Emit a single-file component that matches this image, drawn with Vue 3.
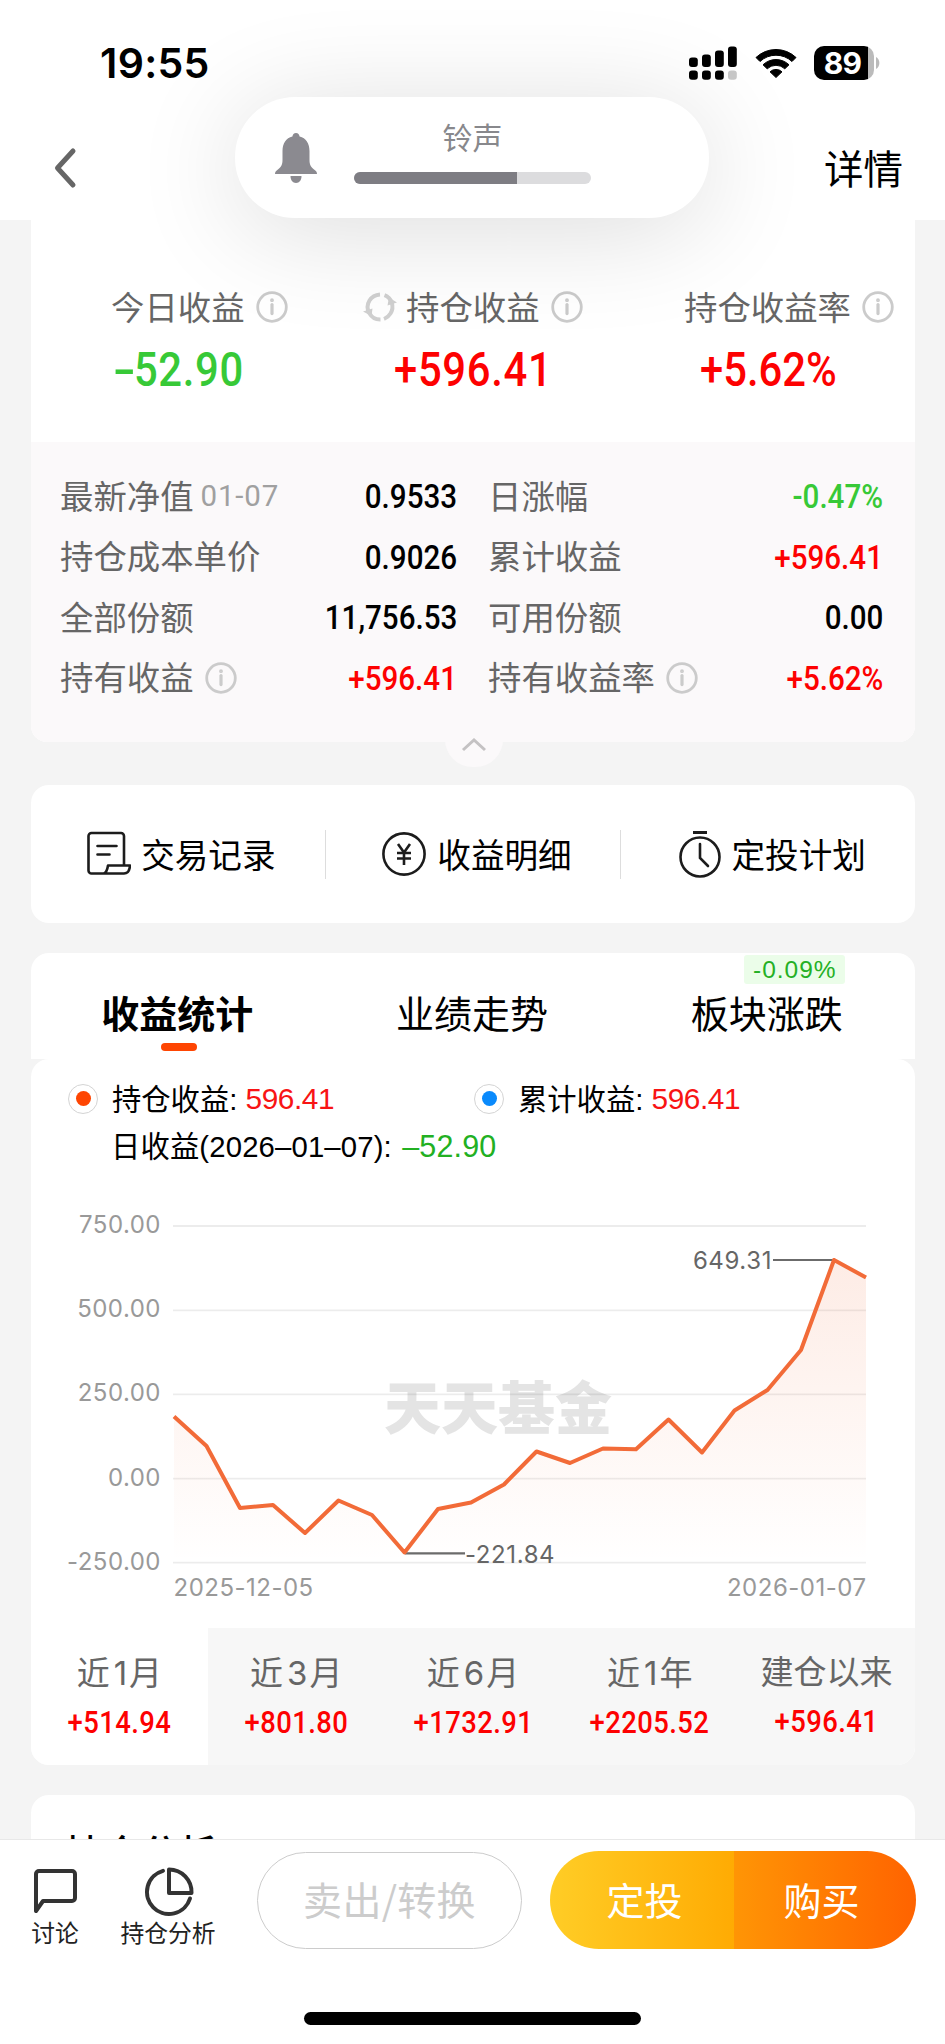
<script setup>
import { h } from 'vue'

const InfoIcon = () =>
  h('svg', { width: 32, height: 32, viewBox: '0 0 32 32', fill: 'none', stroke: '#cbcbcb' }, [
    h('circle', { cx: 16, cy: 16, r: 14.3, 'stroke-width': 2.8 }),
    h('path', { d: 'M16 13.6v9', 'stroke-width': 3.2, 'stroke-linecap': 'round' }),
    h('circle', { cx: 16, cy: 9.2, r: 1.1, 'stroke-width': 1.6 })
  ])

const details = [
  { label: '最新净值', date: '01-07', value: '0.9533', tone: 'ink' },
  { label: '日涨幅', value: '-0.47%', tone: 'down' },
  { label: '持仓成本单价', value: '0.9026', tone: 'ink' },
  { label: '累计收益', value: '+596.41', tone: 'up' },
  { label: '全部份额', value: '11,756.53', tone: 'ink' },
  { label: '可用份额', value: '0.00', tone: 'ink' },
  { label: '持有收益', info: true, value: '+596.41', tone: 'up' },
  { label: '持有收益率', info: true, value: '+5.62%', tone: 'up' }
]

const yLabels = [
  { text: '750.00', y: 26 },
  { text: '500.00', y: 110.3 },
  { text: '250.00', y: 194.3 },
  { text: '0.00', y: 278.7 },
  { text: '-250.00', y: 362.7 }
]

const points = [
  [143, 216.5], [175.5, 246], [209, 308], [242, 305], [274, 333], [307.5, 300.5], [341, 315],
  [373.5, 352.5], [407, 309], [440, 302.5], [473, 284.5], [505.5, 251.5], [539, 263], [572, 248.5],
  [605, 249.3], [637.5, 219.5], [671, 252.5], [703.5, 210.5], [736.5, 190], [770, 150], [803, 60],
  [835, 77.5]
]
const line = points.map((p) => p.join(',')).join(' ')
const area = `143,362 ${line} 835,362`

const periods = [
  { a: '近', n: '1', b: '月', value: '+514.94' },
  { a: '近', n: '3', b: '月', value: '+801.80' },
  { a: '近', n: '6', b: '月', value: '+1732.91' },
  { a: '近', n: '1', b: '年', value: '+2205.52' },
  { a: '建仓以来', n: '', b: '', value: '+596.41' }
]
</script>

<template>
  <div class="screen">
    <header class="top">
      <div class="status">
        <span class="clock">19:55</span>
        <div class="status-icons">
          <svg width="48" height="34" viewBox="0 0 48 34">
            <rect x="0" y="11.500" width="8.8" height="9.500" rx="3" />
            <rect x="13" y="8.500" width="8.8" height="12.500" rx="3" />
            <rect x="26" y="4.500" width="8.8" height="16.500" rx="3" />
            <rect x="39" y="0.500" width="8.8" height="20.500" rx="3" />
            <rect x="0" y="24.500" width="8.8" height="9.300" rx="3" />
            <rect x="13" y="24.500" width="8.8" height="9.300" rx="3" />
            <rect x="26" y="24.500" width="8.8" height="9.300" rx="3" />
            <rect x="39" y="24.500" width="8.8" height="9.300" rx="3" fill="#c8c8c8" />
          </svg>
          <svg class="wifi" width="42" height="32" viewBox="0 0 42 32">
            <path d="M1 10.500a29 29 0 0 1 40 0l-4 4a23.500 23.500 0 0 0-32 0z" stroke="#000" stroke-width="1" stroke-linejoin="round" />
            <path d="M8 17.800a18.700 18.700 0 0 1 26 0l-4.200 4a12.800 12.800 0 0 0-17.600 0z" stroke="#000" stroke-width="1" stroke-linejoin="round" />
            <path d="M15 24.800a8.800 8.800 0 0 1 12 0l-6 5.700z" stroke="#000" stroke-width="1" stroke-linejoin="round" />
          </svg>
          <div class="battery"><span class="level">89</span></div>
          <svg class="nub" width="6" height="12" viewBox="0 0 6 12"><path d="M1 0a7 7 0 0 1 0 12z" fill="#bbb" /></svg>
        </div>
      </div>
      <nav class="nav">
        <svg width="24" height="42" viewBox="0 0 24 42" fill="none" stroke="#666" stroke-width="5" stroke-linecap="round" stroke-linejoin="round"><path d="M20 4 4.500 21 20 38" /></svg>
        <span class="nav-link">详情</span>
      </nav>
    </header>

    <main class="content">
      <section class="summary">
        <div class="stats">
          <div class="stat s1">
            <div class="stat-label"><span>今日收益</span><InfoIcon class="info" /></div>
            <div class="big down"><span class="dash">-</span>52.90</div>
          </div>
          <div class="stat s2">
            <div class="stat-label">
              <svg class="refresh" width="34" height="30" viewBox="0 0 34 30" fill="none" stroke="#d0d0d0" stroke-width="4">
                <path d="M17.500 27.500A12.500 12.500 0 0 1 6.500 8.500Q10 3 17 2.500" /><path d="M21.500 3.200A12.500 12.500 0 0 1 27.500 21.500Q25 25.500 21 27" />
                <path d="M0 19.500 9.500 16.500 8.500 24zM34 10.500l-9.500 3L26 5.500z" fill="#d0d0d0" stroke="none" />
              </svg><span>持仓收益</span><InfoIcon class="info" />
            </div>
            <div class="big up">+596.41</div>
          </div>
          <div class="stat s3">
            <div class="stat-label"><span>持仓收益率</span><InfoIcon class="info" /></div>
            <div class="big up">+5.62%</div>
          </div>
        </div>
        <div class="details">
          <div v-for="(d, i) in details" :key="i" class="detail">
            <span class="detail-label">{{ d.label }}</span>
            <span v-if="d.date" class="detail-date">{{ d.date }}</span>
            <InfoIcon v-if="d.info" class="info" />
            <span class="detail-value" :class="d.tone">{{ d.value }}</span>
          </div>
          <div class="fold">
            <svg width="26" height="14" viewBox="0 0 26 14" fill="none" stroke="#c4c2c3" stroke-width="3"><path d="M2 12 13 2l11 10" /></svg>
          </div>
        </div>
      </section>

      <section class="actions">
        <div class="action">
          <svg width="44" height="46" viewBox="0 0 44 46" fill="none" stroke="#1c1c1c" stroke-width="2.600" stroke-linejoin="round" stroke-linecap="round">
            <path d="M17 42.500H4.500a3 3 0 0 1-3-3V5a3 3 0 0 1 3-3H34a3 3 0 0 1 3 3v29M17 42.500q3-1.500 4-8h22q-.5 8-6 8zM10.500 15h19M10.500 23.500h12" />
          </svg>
          <span>交易记录</span>
        </div>
        <i class="rule"></i>
        <div class="action">
          <svg width="46" height="46" viewBox="0 0 46 46" fill="none" stroke="#1c1c1c" stroke-width="2.600">
            <circle cx="23" cy="23" r="20.600" /><path d="m17 13 6 8.500 6-8.500M23 21.500V34M16 22h14M16 27.500h14" />
          </svg>
          <span>收益明细</span>
        </div>
        <i class="rule"></i>
        <div class="action">
          <svg width="44" height="48" viewBox="0 0 44 48" fill="none" stroke="#1c1c1c" stroke-width="2.600">
            <circle cx="22" cy="27" r="19.500" /><path d="M15 2.500h14" stroke-width="3" /><path d="M22 14v14l8 8" stroke-linecap="round" />
          </svg>
          <span>定投计划</span>
        </div>
      </section>

      <section class="tabs">
        <div class="tab active"><span>收益统计</span></div>
        <div class="tab"><span>业绩走势</span></div>
        <div class="tab"><span>板块涨跌</span><em class="badge">-0.09%</em></div>
      </section>

      <section class="chart-card">
        <div class="legend">
          <div class="legend-item"><i class="radio orange"></i><span class="legend-label">持仓收益: </span><b class="up2">596.41</b></div>
          <div class="legend-item"><i class="radio blue"></i><span class="legend-label">累计收益: </span><b class="up2">596.41</b></div>
        </div>
        <div class="daily"><span>日收益(2026–01–07): </span><b class="down2">–52.90</b></div>
        <svg class="chart" width="884" height="424" viewBox="0 0 884 424">
          <defs>
            <linearGradient id="fade" gradientUnits="userSpaceOnUse" x1="0" y1="60" x2="0" y2="362">
              <stop offset="0" stop-color="#f26b38" stop-opacity=".13" />
              <stop offset="1" stop-color="#f26b38" stop-opacity="0" />
            </linearGradient>
          </defs>
          <text class="mark" x="353" y="229">天天基金</text>
          <line v-for="g in yLabels" :key="'g' + g.text" x1="142" x2="835" :y1="g.y" :y2="g.y" stroke="#000" stroke-opacity=".075" stroke-width="1.800" />
          <text v-for="g in yLabels" :key="g.text" class="axis" x="130" :y="g.y + 7" text-anchor="end">{{ g.text }}</text>
          <polygon :points="area" fill="url(#fade)" />
          <path d="M742 60h61M374 353.300h60" stroke="#6b6b6b" stroke-width="2.200" />
          <polyline :points="line" fill="none" stroke="#f26b38" stroke-width="4" stroke-linejoin="round" />
          <text class="call" x="741" y="69" text-anchor="end">649.31</text>
          <text class="call" x="434" y="362.500">-221.84</text>
          <text class="axis" x="142.500" y="396">2025-12-05</text>
          <text class="axis" x="835.500" y="396" text-anchor="end">2026-01-07</text>
        </svg>
        <div class="periods">
          <div v-for="(p, i) in periods" :key="i" class="period" :class="{ on: i === 0 }">
            <div class="period-label">{{ p.a }}<span v-if="p.n" class="digit">{{ p.n }}</span>{{ p.b }}</div>
            <div class="period-value">{{ p.value }}</div>
          </div>
        </div>
      </section>

      <section class="analysis"><span>持仓分析</span></section>
    </main>

    <footer class="bottom">
      <div class="tool t1">
        <svg width="44" height="48" viewBox="0 0 44 48" fill="none" stroke="#333" stroke-width="4" stroke-linejoin="round"><path d="M3 44V7a3 3 0 0 1 3-3h33a3 3 0 0 1 3 3v24a3 3 0 0 1-3 3H10z" /></svg>
        <span>讨论</span>
      </div>
      <div class="tool t2">
        <svg width="50" height="50" viewBox="0 0 50 50" fill="none" stroke="#333" stroke-width="4" stroke-linejoin="round" stroke-linecap="round"><path d="M19 3.800A22 22 0 1 0 46 31.500" /><path d="M25 2.500V26h22.500A22.600 22.600 0 0 0 25 2.500z" /></svg>
        <span>持仓分析</span>
      </div>
      <div class="sell">卖出/转换</div>
      <div class="trade"><div class="plan">定投</div><div class="buy">购买</div></div>
      <i class="home"></i>
    </footer>

    <div class="ringer">
      <svg width="42" height="50" viewBox="0 0 42 50" fill="#8b8a90">
        <path d="M21 0c2.200 0 3.300 1.500 3.600 3.600C31 5 34.500 10.500 34.500 18v9c0 5.500 2 7.500 5.500 10.300 1.200 1 2 2 2 3.700H0c0-1.700.8-2.700 2-3.700C5.500 34.500 7.500 32.500 7.500 27v-9c0-7.500 3.500-13 9.900-14.400C17.700 1.500 18.800 0 21 0z" />
        <path d="M15.500 43h11c0 4-2 7-5.500 7s-5.500-3-5.500-7z" />
      </svg>
      <div class="ringer-body">
        <span>铃声</span>
        <div class="track"><i></i></div>
      </div>
    </div>
  </div>
</template>

<style>
body {
  margin: 0;
}
</style>

<style scoped>
.screen {
  position: relative;
  width: 945px;
  height: 2044px;
  overflow: hidden;
  display: flex;
  flex-direction: column;
  background: #f4f4f4;
  color: #000;
  font-family: "Liberation Sans", "Noto Sans CJK SC", sans-serif;
}
svg {
  display: block;
  flex: none;
}
.top {
  height: 220px;
  flex: none;
  background: #fff;
}
.status {
  height: 124px;
  box-sizing: border-box;
  padding: 39px 64px 0 100px;
  display: flex;
  justify-content: space-between;
  align-items: flex-start;
}
.clock {
  font: 600 41px/48px Inter, sans-serif;
  letter-spacing: 0.3px;
}
.status-icons {
  display: flex;
  align-items: center;
  padding-top: 7px;
}
.wifi {
  margin: 0 17px 0 18px;
}
.battery {
  width: 60px;
  height: 34px;
  border-radius: 10px;
  background: linear-gradient(90deg, #000 54px, #bbb 54px);
}
.level {
  display: block;
  width: 57px;
  text-align: center;
  color: #fff;
  font: 700 30px/34px Inter, sans-serif;
  letter-spacing: -0.8px;
}
.nub {
  margin-left: 1px;
}
.nav {
  display: flex;
  justify-content: space-between;
  align-items: center;
  padding: 0 42px 0 53px;
  height: 88px;
}
.nav-link {
  font-size: 39.5px;
  line-height: 88px;
  padding-top: 4px;
}
.content {
  height: 1619px;
  overflow: hidden;
  padding: 0 30px 0 31px;
}
.summary {
  border-radius: 0 0 16px 16px;
  background: #fff;
}
.stats {
  height: 222px;
  display: grid;
  grid-template-columns: 295px 295px 294px;
}
.stat {
  padding-top: 62px;
}
.stat-label {
  display: flex;
  align-items: center;
  height: 50px;
  font-size: 33.4px;
  color: #666;
  white-space: nowrap;
}
.stat-label span,
.detail-label {
  padding-bottom: 4px;
}
.s1 .stat-label {
  padding-left: 80px;
}
.s2 .stat-label {
  padding-left: 37px;
}
.s3 .stat-label {
  padding-left: 63px;
}
.info {
  margin-left: 11px;
}
.refresh {
  margin-right: 9px;
}
.big {
  font: 500 48px/56px Roboto, sans-serif;
  margin-top: 10px;
  letter-spacing: 0.8px;
  transform: scaleX(0.87);
  transform-origin: left;
}
.dash {
  display: inline-block;
  width: 24px;
  transform: scaleX(1.6);
  transform-origin: left;
}
.s1 .big {
  margin-left: 82px;
}
.s2 .big {
  margin-left: 68px;
}
.s3 .big {
  margin-left: 79px;
  letter-spacing: 0;
}
.up {
  color: #fd0101;
}
.down {
  color: #37c937;
}
.ink {
  color: #000;
}
.details {
  position: relative;
  height: 300px;
  box-sizing: border-box;
  padding: 24px 32px 0 29px;
  background: #fbf9fa;
  border-radius: 0 0 16px 16px;
  display: grid;
  grid-template-columns: 397px 395px;
  grid-auto-rows: 60.5px;
  column-gap: 31px;
}
.detail {
  display: flex;
  align-items: center;
}
.detail-label {
  font-size: 33.4px;
  color: #666;
}
.detail-date {
  font: 400 29.5px Roboto, sans-serif;
  letter-spacing: 0.8px;
  color: #a0a0a0;
  margin-left: 7px;
}
.detail-value {
  margin-left: auto;
  font: 500 34px Roboto, sans-serif;
  transform: scaleX(0.87);
  transform-origin: right;
}
.fold {
  position: absolute;
  left: 414px;
  top: 270px;
  width: 58px;
  height: 55px;
  box-sizing: border-box;
  padding-top: 11px;
  border-radius: 29px;
  background: #fbf9fa;
  display: flex;
  justify-content: center;
  align-items: center;
}
.actions {
  margin-top: 43px;
  height: 138px;
  border-radius: 18px;
  background: #fff;
  display: flex;
  align-items: center;
}
.action {
  flex: 1;
  display: flex;
  justify-content: center;
  align-items: center;
  gap: 10px;
  padding-left: 7px;
  font-size: 33.6px;
}
.action span {
  padding-bottom: 2px;
}
.rule {
  width: 1.500px;
  height: 49px;
  background: #ddd;
}
.tabs {
  margin-top: 30px;
  height: 106px;
  border-radius: 18px 18px 0 0;
  background: #fff;
  display: grid;
  grid-template-columns: 1fr 1fr 1fr;
}
.tab {
  position: relative;
  text-align: center;
  font-size: 38px;
  line-height: 56px;
  padding: 34px 2px 0 0;
}
.active {
  font-weight: 700;
}
.active::after {
  content: "";
  display: block;
  width: 36px;
  height: 8px;
  border-radius: 4px;
  background: #fe4502;
  margin: 0 auto;
  transform: translateX(2px);
}
.badge {
  position: absolute;
  left: 124px;
  top: 2px;
  width: 101px;
  height: 29px;
  border-radius: 3px;
  background: #ebfde9;
  color: #25b025;
  font: 400 24.500px/29px "Liberation Sans", sans-serif;
  letter-spacing: 1px;
}
.chart-card {
  height: 706px;
  border-radius: 18px;
  overflow: hidden;
  background: #fff;
}
.legend {
  display: flex;
  height: 47px;
  padding: 16px 0 0 37px;
}
.legend-item {
  width: 406px;
  display: flex;
  align-items: center;
}
.legend-item,
.daily {
  font-size: 29.3px;
  white-space: pre;
}
.legend-label {
  padding-bottom: 3px;
}
.legend-item b,
.daily b {
  font-weight: 400;
}
.up2 {
  color: #f81414;
  font-size: 29.8px;
  letter-spacing: -0.4px;
}
.down2 {
  color: #22b022;
  font-size: 30.5px;
  margin-left: 2px;
}
.radio {
  width: 30px;
  height: 30px;
  box-sizing: border-box;
  border: 1.500px solid #d4d4d4;
  border-radius: 50%;
  display: flex;
  align-items: center;
  justify-content: center;
  margin-right: 14px;
}
.radio::after {
  content: "";
  width: 15px;
  height: 15px;
  border-radius: 50%;
}
.orange::after {
  background: #fe4502;
}
.blue::after {
  background: #0a8afc;
}
.daily {
  height: 78px;
  padding-left: 80px;
  line-height: 48px;
  letter-spacing: 0.15px;
}
.chart text {
  font-family: Inter, sans-serif;
}
.chart .axis {
  font-size: 24px;
  fill: #999;
  letter-spacing: 0.5px;
}
.chart .call {
  font-size: 24px;
  fill: #666;
  letter-spacing: 0.6px;
}
.chart .mark {
  font: 900 57px "Noto Sans CJK SC", sans-serif;
  fill: #e4e4e4;
}
.periods {
  display: grid;
  grid-template-columns: repeat(5, 1fr);
  height: 137px;
  margin-top: 4px;
  background: #f7f7f7;
}
.period {
  text-align: center;
  padding-top: 21px;
}
.on {
  background: #fff;
}
.period-label {
  font-size: 33px;
  line-height: 48px;
  color: #666;
}
.digit {
  font-family: Inter, sans-serif;
  padding: 0 2px 0 4px;
}
.period-value {
  font: 500 31.5px/40px Roboto, sans-serif;
  color: #fd0101;
  margin-top: 5px;
  letter-spacing: 0.5px;
  transform: scaleX(0.87);
}
.analysis {
  margin-top: 30px;
  height: 80px;
  border-radius: 18px 18px 0 0;
  background: #fff;
  padding: 31px 0 0 34px;
  font-size: 38px;
  font-weight: 500;
  line-height: 56px;
}
.bottom {
  position: relative;
  height: 205px;
  box-sizing: border-box;
  border-top: 1px solid #e8e8e8;
  background: #fff;
  display: flex;
  align-items: flex-start;
}
.tool {
  display: flex;
  flex-direction: column;
  align-items: center;
  font-size: 23.8px;
  line-height: 34px;
  color: #222;
  white-space: nowrap;
}
.t1 {
  width: 50px;
  margin-left: 30px;
  padding-top: 27px;
}
.t2 {
  width: 96px;
  margin-left: 40px;
  padding-top: 27px;
}
.t1 svg {
  margin-bottom: 2px;
}
.t2 svg {
  margin-left: 2px;
}
.sell {
  box-sizing: border-box;
  width: 265px;
  height: 97px;
  margin: 12px 0 0 41px;
  border: 1.500px solid #ccc;
  border-radius: 49px;
  text-align: center;
  font-family: "Noto Sans CJK SC", sans-serif;
  font-size: 39px;
  line-height: 91px;
  letter-spacing: 0.3px;
  color: #ccc;
}
.trade {
  margin: 11px 0 0 28px;
  width: 366px;
  height: 98px;
  border-radius: 49px;
  overflow: hidden;
  display: flex;
  color: #fff;
  font-size: 38px;
  line-height: 102px;
  text-align: center;
}
.plan {
  box-sizing: border-box;
  width: 184px;
  padding-left: 5px;
  background: linear-gradient(90deg, #ffcd26, #ffab03);
}
.buy {
  flex: 1;
  padding-right: 7px;
  background: linear-gradient(90deg, #ff9505, #ff6300);
}
.home {
  position: absolute;
  left: 304px;
  top: 172px;
  width: 337px;
  height: 13px;
  border-radius: 7px;
  background: #000;
}
.ringer {
  position: absolute;
  left: 235px;
  top: 97px;
  width: 474px;
  height: 121px;
  box-sizing: border-box;
  border-radius: 60px;
  background: #fff;
  box-shadow: 0 12px 110px rgba(0, 0, 0, 0.14);
  display: flex;
  padding-left: 40px;
}
.ringer > svg {
  margin-top: 36px;
}
.ringer-body {
  margin-left: 37px;
  width: 237px;
  text-align: center;
  font-size: 30px;
  line-height: 44px;
  padding-top: 20px;
  color: #88888c;
}
.track {
  height: 12px;
  border-radius: 6px;
  overflow: hidden;
  background: #dcdcde;
  margin-top: 11px;
}
.track i {
  display: block;
  width: 163px;
  height: 12px;
  background: #7e7d83;
}
</style>
